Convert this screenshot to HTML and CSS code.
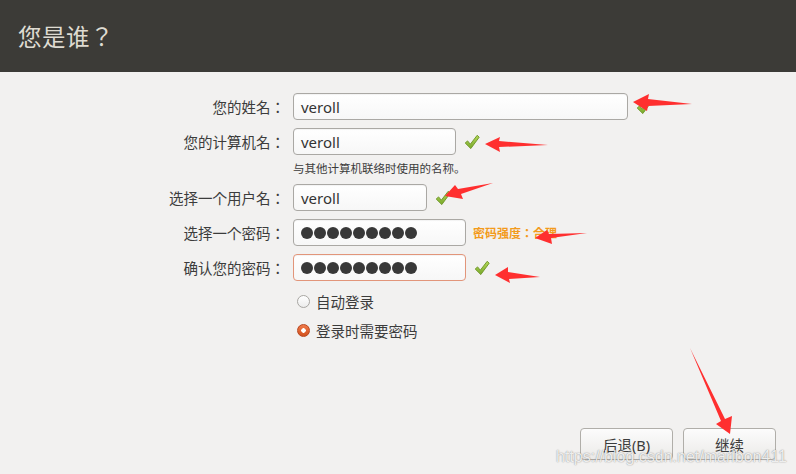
FILE: index.html
```html
<!DOCTYPE html>
<html lang="zh-CN">
<head>
  <meta charset="UTF-8">
  <title>您是谁？</title>
  <link rel="stylesheet" href="styles.css">
</head>
<body>

<header class="titlebar">
  <h1>您是谁？</h1>
</header>

<main class="form">
  <div class="row">
    <label class="label">您的姓名：</label>
    <div class="entry entry-name">veroll</div>
    <svg class="check" viewBox="0 0 16 16"><use href="#tick"/></svg>
  </div>
  <div class="row">
    <label class="label">您的计算机名：</label>
    <div class="entry entry-host">veroll</div>
    <svg class="check" viewBox="0 0 16 16"><use href="#tick"/></svg>
  </div>
  <div class="hint">与其他计算机联络时使用的名称。</div>
  <div class="row">
    <label class="label">选择一个用户名：</label>
    <div class="entry entry-user">veroll</div>
    <svg class="check" viewBox="0 0 16 16"><use href="#tick"/></svg>
  </div>
  <div class="row">
    <label class="label">选择一个密码：</label>
    <div class="entry entry-pass">
      <i></i><i></i><i></i><i></i><i></i><i></i><i></i><i></i><i></i>
    </div>
    <span class="strength">密码强度：合理</span>
  </div>
  <div class="row">
    <label class="label">确认您的密码：</label>
    <div class="entry entry-pass entry-error">
      <i></i><i></i><i></i><i></i><i></i><i></i><i></i><i></i><i></i>
    </div>
    <svg class="check" viewBox="0 0 16 16"><use href="#tick"/></svg>
  </div>

  <div class="options">
    <div class="radio"><span class="dot"></span>自动登录</div>
    <div class="radio"><span class="dot dot-on"></span>登录时需要密码</div>
  </div>
</main>

<footer class="actions">
  <button class="btn">后退(B)</button>
  <button class="btn">继续</button>
</footer>

<!-- значок галочки -->
<svg width="0" height="0" class="defs">
  <defs>
    <linearGradient id="green" x1="0" y1="0" x2="0" y2="1">
      <stop offset="0" stop-color="#b5d95a"/>
      <stop offset="1" stop-color="#78a82a"/>
    </linearGradient>
    <symbol id="tick" viewBox="0 0 16 16">
      <path d="M1.2 9 L3.6 6.9 L6.3 10.2 L13.2 1.3 L15.2 3.2 L6.8 14.6 Z" fill="url(#green)" stroke="#6b9323" stroke-width="0.9" stroke-linejoin="round"/>
    </symbol>
  </defs>
</svg>

<!-- стрелки поверх скриншота -->
<svg class="marks" viewBox="0 0 796 474">
  <g fill="#ff2f2f">
    <polygon points="633,102 649,94 648,99 692,104 648,106 647,111"/>
    <polygon points="485,144 500,137 499,141 548,145 499,147 500,152"/>
    <polygon points="445,196 455,185 458,189 493,183 461,194 463,199"/>
    <polygon points="535,238 547,230 549,234 587,233 551,238 552,244"/>
    <polygon points="495,275 508,267 508,272 540,277 509,279 510,283"/>
    <polygon points="690,348 725,419 732,416 730,434 716,424 721,421"/>
  </g>
</svg>

<div class="watermark">https://blog.csdn.net/maribon411</div>

</body>
</html>
```

FILE: styles.css
```css
* {
  box-sizing: border-box;
}
body {
  margin: 0;
  height: 100vh;
  background: #f2f1f0;
  color: #3c3c3c;
  font-family: 'Noto Sans', 'Noto Sans CJK SC', sans-serif;
  display: flex;
  flex-direction: column;
  overflow: hidden;
  position: relative;
}
/* центрированные полноширинные знаки, как в шрифте оригинала */
.titlebar h1,
.label,
.strength {
  font-family: 'Noto Sans CJK JP', sans-serif;
  font-feature-settings: "locl" 0;
}
.titlebar {
  height: 72px;
  background: #3c3b37;
  display: flex;
  align-items: center;
  padding-left: 18px;
}
.titlebar h1 {
  margin: 0;
  font-size: 23.5px;
  font-weight: normal;
  color: #dfdbd2;
  letter-spacing: 0.5px;
}
.form {
  flex: 1;
  padding-top: 21px;
}
.row {
  display: flex;
  align-items: center;
  height: 27px;
  margin-bottom: 8px;
}
.label {
  width: 285px;
  text-align: right;
  font-size: 14.5px;
  margin-right: 8px;
  color: #3c3c3c;
}
.entry {
  height: 27px;
  border: 1px solid #aaa8a4;
  border-radius: 4px;
  background: linear-gradient(#ffffff, #f7f7f7);
  padding-left: 7px;
  display: flex;
  align-items: center;
  font-size: 15px;
  color: #333;
  box-shadow: inset 0 1px 1px rgba(0,0,0,0.05);
}
.entry-name { width: 335px; }
.entry-host { width: 163px; }
.entry-user { width: 134px; }
.entry-pass { width: 173px; }
.entry-error {
  border-color: #e2957a;
}
.entry i {
  display: inline-block;
  width: 12px;
  height: 12px;
  border-radius: 50%;
  background: #383838;
  margin-right: 1px;
}
.check {
  width: 16px;
  height: 16px;
  margin-left: 8px;
}
.strength {
  margin-left: 7px;
  font-size: 12px;
  font-weight: bold;
  color: #f39b1c;
}
.hint {
  margin: -3px 0 8px 293px;
  font-family: 'Noto Sans CJK SC', sans-serif;
  font-size: 11.5px;
  line-height: 16px;
  color: #3c3c3c;
}
.options {
  margin: 11px 0 0 297px;
}
.radio {
  display: flex;
  align-items: center;
  height: 18px;
  margin-bottom: 11px;
  font-family: 'Noto Sans CJK SC', sans-serif;
  font-size: 14.5px;
}
.dot {
  width: 13px;
  height: 13px;
  border-radius: 50%;
  border: 1px solid #a8a6a2;
  background: linear-gradient(#ffffff, #ececec);
  margin-right: 6px;
}
.dot-on {
  border-color: #b8461f;
  background: radial-gradient(circle, #ffffff 0 2px, transparent 2.5px),
              linear-gradient(#f07a4a, #d2521e);
}
.actions {
  display: flex;
  justify-content: flex-end;
  gap: 10px;
  padding: 0 20px 14px 0;
}
.btn {
  width: 93px;
  height: 32px;
  border: 1px solid #b0aea9;
  border-radius: 4px;
  background: linear-gradient(#fcfcfc, #ebeae8);
  font-family: 'Noto Sans', 'Noto Sans CJK SC', sans-serif;
  font-size: 14.5px;
  color: #3c3c3c;
}
.defs {
  position: absolute;
}
.marks {
  position: absolute;
  left: 0;
  top: 0;
  width: 796px;
  height: 474px;
  pointer-events: none;
}
.watermark {
  position: absolute;
  right: 9px;
  bottom: 8px;
  font-family: 'Liberation Sans', sans-serif;
  font-size: 16px;
  color: rgba(255,255,255,0.85);
  text-shadow: 0 0 1px rgba(0,0,0,0.35), 0 0 2px rgba(0,0,0,0.2);
  pointer-events: none;
}
```
